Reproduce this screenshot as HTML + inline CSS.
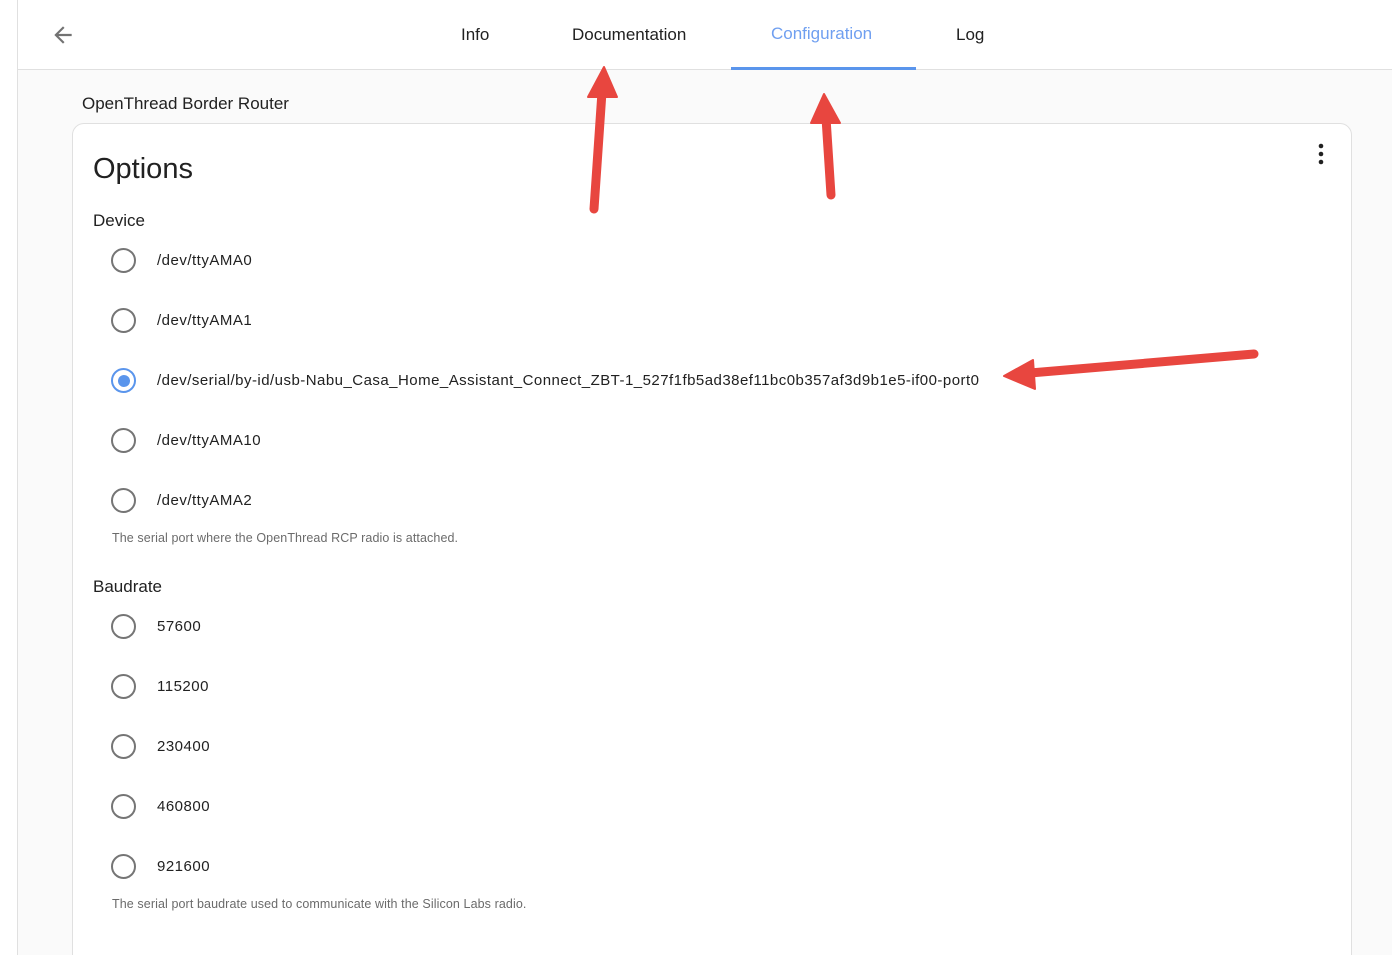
<!DOCTYPE html>
<html style="overflow:hidden;height:955px"><head><meta charset="utf-8"><style>
*{margin:0;padding:0;box-sizing:border-box}
body{width:1392px;height:955px;overflow:hidden;background:#fafafa;font-family:"Liberation Sans",Roboto,sans-serif;color:#212121;position:relative}
.side{position:absolute;left:0;top:0;width:18px;height:955px;background:#fff;border-right:1px solid #e0e0e0}
.hdr{position:absolute;left:18px;top:0;right:0;height:70px;background:#fff;border-bottom:1px solid #e0e0e0}
.tab{position:absolute;top:25px;font-size:17px;color:#212121}
.title{position:absolute;left:82px;top:94px;font-size:17px}
.card{position:absolute;left:72px;top:123px;width:1280px;height:850px;background:#fff;border:1px solid #e0e0e0;border-radius:12px}
.abs{position:absolute}
.radio{position:absolute;left:111px;width:25px;height:25px;border:2px solid #757575;border-radius:50%}
.lbl{position:absolute;left:157px;font-size:15px;letter-spacing:.5px}
.help{position:absolute;left:112px;font-size:12.5px;color:#6b6b6b;letter-spacing:.1px}
.h{position:absolute;left:93px;font-size:17px}
</style></head><body>
<div class="side"></div>
<div class="hdr"></div>
<svg class="abs" style="left:50px;top:22px" width="26" height="26" viewBox="0 0 24 24"><path d="M20 11H7.8l5.6-5.6L12 4l-8 8 8 8 1.4-1.4L7.8 13H20z" fill="#727272"/></svg>
<div class="tab" style="left:461px">Info</div>
<div class="tab" style="left:572px">Documentation</div>
<div class="tab" style="left:771px;top:24px;color:#6f9ff0">Configuration</div>
<div class="abs" style="left:731px;top:67px;width:185px;height:3px;background:#5a95ec"></div>
<div class="tab" style="left:956px">Log</div>
<div class="title">OpenThread Border Router</div>
<div class="card"></div>
<div class="abs" style="left:93px;top:153px;font-size:29px">Options</div>
<svg class="abs" style="left:1315px;top:142px" width="12" height="24"><circle cx="6" cy="4" r="2.3" fill="#212121"/><circle cx="6" cy="12" r="2.3" fill="#212121"/><circle cx="6" cy="20" r="2.3" fill="#212121"/></svg>
<div class="h" style="top:211px">Device</div>
<div class="radio" style="top:248px"></div><div class="lbl" style="top:252px">/dev/ttyAMA0</div>
<div class="radio" style="top:308px"></div><div class="lbl" style="top:312px">/dev/ttyAMA1</div>
<div class="radio" style="top:368px;border-color:#5a95ec"><div style="position:absolute;left:4.5px;top:4.5px;width:12px;height:12px;border-radius:50%;background:#5a95ec"></div></div><div class="lbl" style="top:372px;letter-spacing:.47px">/dev/serial/by-id/usb-Nabu_Casa_Home_Assistant_Connect_ZBT-1_527f1fb5ad38ef11bc0b357af3d9b1e5-if00-port0</div>
<div class="radio" style="top:428px"></div><div class="lbl" style="top:432px">/dev/ttyAMA10</div>
<div class="radio" style="top:488px"></div><div class="lbl" style="top:492px">/dev/ttyAMA2</div>
<div class="help" style="top:531px">The serial port where the OpenThread RCP radio is attached.</div>
<div class="h" style="top:577px">Baudrate</div>
<div class="radio" style="top:614px"></div><div class="lbl" style="top:618px">57600</div>
<div class="radio" style="top:674px"></div><div class="lbl" style="top:678px">115200</div>
<div class="radio" style="top:734px"></div><div class="lbl" style="top:738px">230400</div>
<div class="radio" style="top:794px"></div><div class="lbl" style="top:798px">460800</div>
<div class="radio" style="top:854px"></div><div class="lbl" style="top:858px">921600</div>
<div class="help" style="top:897px">The serial port baudrate used to communicate with the Silicon Labs radio.</div>
<svg class="abs" style="left:0;top:0" width="1392" height="955">
<g fill="#e8463f" stroke="#e8463f" stroke-linecap="round">
<line x1="594" y1="209" x2="602" y2="92" stroke-width="9"/>
<polygon points="604,67 588,97 617,97" stroke-width="2" stroke-linejoin="round"/>
<line x1="831" y1="195" x2="826" y2="118" stroke-width="9"/>
<polygon points="824,94 811,123 840,123" stroke-width="2" stroke-linejoin="round"/>
<line x1="1254" y1="354" x2="1030" y2="373" stroke-width="9"/>
<polygon points="1004,376 1033,360 1035,389" stroke-width="2" stroke-linejoin="round"/>
</g></svg>
</body></html>
